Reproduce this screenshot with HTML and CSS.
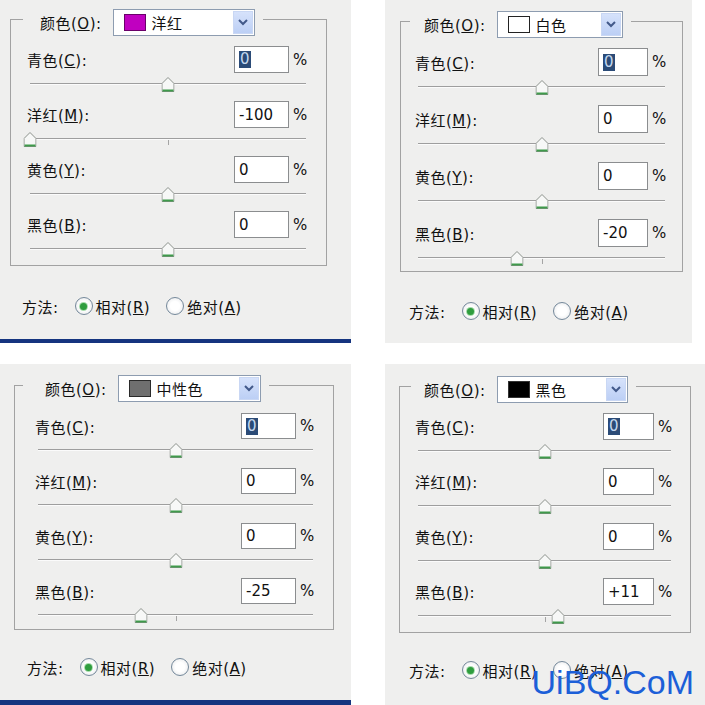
FILE: index.html
```html
<!DOCTYPE html>
<html lang="zh-CN">
<head>
  <meta charset="UTF-8" />
  <title>可选颜色</title>
  <link rel="stylesheet" href="styles.css">
</head>
<body>

<div class="sheet">

  <!-- 洋红 -->
  <section class="dialog d-tl">
    <div class="legend">
      <span class="lbl">颜色(<u>O</u>):</span>
      <div class="combo">
        <span class="swatch magenta"></span>
        <span class="combo-text">洋红</span>
        <span class="combo-btn"><svg width="10" height="7" viewBox="0 0 10 7"><polyline points="1,1 5,5 9,1" fill="none" stroke="#42598a" stroke-width="2"/></svg></span>
      </div>
    </div>
    <div class="group">
      <div class="field"><span class="lbl">青色(<u>C</u>):</span><div class="num"><span class="sel">0</span></div><span class="pct">%</span></div>
      <div class="slider"><span class="thumb" style="left:50%"><svg width="13" height="15" viewBox="0 0 13 15"><polygon points="0.5,6.5 6.5,0.5 12.5,6.5 12.5,14.5 0.5,14.5" fill="#f7f8f7" stroke="#8b918b"/><path d="M1 13.5H12" stroke="#3f9a4b" stroke-width="2"/></svg></span></div>
      <div class="field"><span class="lbl">洋红(<u>M</u>):</span><div class="num">-100</div><span class="pct">%</span></div>
      <div class="slider"><span class="thumb" style="left:0%"><svg width="13" height="15" viewBox="0 0 13 15"><polygon points="0.5,6.5 6.5,0.5 12.5,6.5 12.5,14.5 0.5,14.5" fill="#f7f8f7" stroke="#8b918b"/><path d="M1 13.5H12" stroke="#3f9a4b" stroke-width="2"/></svg></span></div>
      <div class="field"><span class="lbl">黄色(<u>Y</u>):</span><div class="num">0</div><span class="pct">%</span></div>
      <div class="slider"><span class="thumb" style="left:50%"><svg width="13" height="15" viewBox="0 0 13 15"><polygon points="0.5,6.5 6.5,0.5 12.5,6.5 12.5,14.5 0.5,14.5" fill="#f7f8f7" stroke="#8b918b"/><path d="M1 13.5H12" stroke="#3f9a4b" stroke-width="2"/></svg></span></div>
      <div class="field"><span class="lbl">黑色(<u>B</u>):</span><div class="num">0</div><span class="pct">%</span></div>
      <div class="slider"><span class="thumb" style="left:50%"><svg width="13" height="15" viewBox="0 0 13 15"><polygon points="0.5,6.5 6.5,0.5 12.5,6.5 12.5,14.5 0.5,14.5" fill="#f7f8f7" stroke="#8b918b"/><path d="M1 13.5H12" stroke="#3f9a4b" stroke-width="2"/></svg></span></div>
    </div>
    <div class="method">
      <span class="lbl">方法:</span>
      <label class="opt"><span class="radio on"></span><span class="lbl">相对(<u>R</u>)</span></label>
      <label class="opt"><span class="radio"></span><span class="lbl">绝对(<u>A</u>)</span></label>
    </div>
  </section>

  <!-- 白色 -->
  <section class="dialog d-tr">
    <div class="legend">
      <span class="lbl">颜色(<u>O</u>):</span>
      <div class="combo">
        <span class="swatch white"></span>
        <span class="combo-text">白色</span>
        <span class="combo-btn"><svg width="10" height="7" viewBox="0 0 10 7"><polyline points="1,1 5,5 9,1" fill="none" stroke="#42598a" stroke-width="2"/></svg></span>
      </div>
    </div>
    <div class="group">
      <div class="field"><span class="lbl">青色(<u>C</u>):</span><div class="num"><span class="sel">0</span></div><span class="pct">%</span></div>
      <div class="slider"><span class="thumb" style="left:50%"><svg width="13" height="15" viewBox="0 0 13 15"><polygon points="0.5,6.5 6.5,0.5 12.5,6.5 12.5,14.5 0.5,14.5" fill="#f7f8f7" stroke="#8b918b"/><path d="M1 13.5H12" stroke="#3f9a4b" stroke-width="2"/></svg></span></div>
      <div class="field"><span class="lbl">洋红(<u>M</u>):</span><div class="num">0</div><span class="pct">%</span></div>
      <div class="slider"><span class="thumb" style="left:50%"><svg width="13" height="15" viewBox="0 0 13 15"><polygon points="0.5,6.5 6.5,0.5 12.5,6.5 12.5,14.5 0.5,14.5" fill="#f7f8f7" stroke="#8b918b"/><path d="M1 13.5H12" stroke="#3f9a4b" stroke-width="2"/></svg></span></div>
      <div class="field"><span class="lbl">黄色(<u>Y</u>):</span><div class="num">0</div><span class="pct">%</span></div>
      <div class="slider"><span class="thumb" style="left:50%"><svg width="13" height="15" viewBox="0 0 13 15"><polygon points="0.5,6.5 6.5,0.5 12.5,6.5 12.5,14.5 0.5,14.5" fill="#f7f8f7" stroke="#8b918b"/><path d="M1 13.5H12" stroke="#3f9a4b" stroke-width="2"/></svg></span></div>
      <div class="field"><span class="lbl">黑色(<u>B</u>):</span><div class="num">-20</div><span class="pct">%</span></div>
      <div class="slider"><span class="thumb" style="left:40%"><svg width="13" height="15" viewBox="0 0 13 15"><polygon points="0.5,6.5 6.5,0.5 12.5,6.5 12.5,14.5 0.5,14.5" fill="#f7f8f7" stroke="#8b918b"/><path d="M1 13.5H12" stroke="#3f9a4b" stroke-width="2"/></svg></span></div>
    </div>
    <div class="method">
      <span class="lbl">方法:</span>
      <label class="opt"><span class="radio on"></span><span class="lbl">相对(<u>R</u>)</span></label>
      <label class="opt"><span class="radio"></span><span class="lbl">绝对(<u>A</u>)</span></label>
    </div>
  </section>

  <!-- 中性色 -->
  <section class="dialog d-bl">
    <div class="legend">
      <span class="lbl">颜色(<u>O</u>):</span>
      <div class="combo">
        <span class="swatch neutral"></span>
        <span class="combo-text">中性色</span>
        <span class="combo-btn"><svg width="10" height="7" viewBox="0 0 10 7"><polyline points="1,1 5,5 9,1" fill="none" stroke="#42598a" stroke-width="2"/></svg></span>
      </div>
    </div>
    <div class="group">
      <div class="field"><span class="lbl">青色(<u>C</u>):</span><div class="num"><span class="sel">0</span></div><span class="pct">%</span></div>
      <div class="slider"><span class="thumb" style="left:50%"><svg width="13" height="15" viewBox="0 0 13 15"><polygon points="0.5,6.5 6.5,0.5 12.5,6.5 12.5,14.5 0.5,14.5" fill="#f7f8f7" stroke="#8b918b"/><path d="M1 13.5H12" stroke="#3f9a4b" stroke-width="2"/></svg></span></div>
      <div class="field"><span class="lbl">洋红(<u>M</u>):</span><div class="num">0</div><span class="pct">%</span></div>
      <div class="slider"><span class="thumb" style="left:50%"><svg width="13" height="15" viewBox="0 0 13 15"><polygon points="0.5,6.5 6.5,0.5 12.5,6.5 12.5,14.5 0.5,14.5" fill="#f7f8f7" stroke="#8b918b"/><path d="M1 13.5H12" stroke="#3f9a4b" stroke-width="2"/></svg></span></div>
      <div class="field"><span class="lbl">黄色(<u>Y</u>):</span><div class="num">0</div><span class="pct">%</span></div>
      <div class="slider"><span class="thumb" style="left:50%"><svg width="13" height="15" viewBox="0 0 13 15"><polygon points="0.5,6.5 6.5,0.5 12.5,6.5 12.5,14.5 0.5,14.5" fill="#f7f8f7" stroke="#8b918b"/><path d="M1 13.5H12" stroke="#3f9a4b" stroke-width="2"/></svg></span></div>
      <div class="field"><span class="lbl">黑色(<u>B</u>):</span><div class="num">-25</div><span class="pct">%</span></div>
      <div class="slider"><span class="thumb" style="left:37.5%"><svg width="13" height="15" viewBox="0 0 13 15"><polygon points="0.5,6.5 6.5,0.5 12.5,6.5 12.5,14.5 0.5,14.5" fill="#f7f8f7" stroke="#8b918b"/><path d="M1 13.5H12" stroke="#3f9a4b" stroke-width="2"/></svg></span></div>
    </div>
    <div class="method">
      <span class="lbl">方法:</span>
      <label class="opt"><span class="radio on"></span><span class="lbl">相对(<u>R</u>)</span></label>
      <label class="opt"><span class="radio"></span><span class="lbl">绝对(<u>A</u>)</span></label>
    </div>
  </section>

  <!-- 黑色 -->
  <section class="dialog d-br">
    <div class="legend">
      <span class="lbl">颜色(<u>O</u>):</span>
      <div class="combo">
        <span class="swatch black"></span>
        <span class="combo-text">黑色</span>
        <span class="combo-btn"><svg width="10" height="7" viewBox="0 0 10 7"><polyline points="1,1 5,5 9,1" fill="none" stroke="#42598a" stroke-width="2"/></svg></span>
      </div>
    </div>
    <div class="group">
      <div class="field"><span class="lbl">青色(<u>C</u>):</span><div class="num"><span class="sel">0</span></div><span class="pct">%</span></div>
      <div class="slider"><span class="thumb" style="left:50%"><svg width="13" height="15" viewBox="0 0 13 15"><polygon points="0.5,6.5 6.5,0.5 12.5,6.5 12.5,14.5 0.5,14.5" fill="#f7f8f7" stroke="#8b918b"/><path d="M1 13.5H12" stroke="#3f9a4b" stroke-width="2"/></svg></span></div>
      <div class="field"><span class="lbl">洋红(<u>M</u>):</span><div class="num">0</div><span class="pct">%</span></div>
      <div class="slider"><span class="thumb" style="left:50%"><svg width="13" height="15" viewBox="0 0 13 15"><polygon points="0.5,6.5 6.5,0.5 12.5,6.5 12.5,14.5 0.5,14.5" fill="#f7f8f7" stroke="#8b918b"/><path d="M1 13.5H12" stroke="#3f9a4b" stroke-width="2"/></svg></span></div>
      <div class="field"><span class="lbl">黄色(<u>Y</u>):</span><div class="num">0</div><span class="pct">%</span></div>
      <div class="slider"><span class="thumb" style="left:50%"><svg width="13" height="15" viewBox="0 0 13 15"><polygon points="0.5,6.5 6.5,0.5 12.5,6.5 12.5,14.5 0.5,14.5" fill="#f7f8f7" stroke="#8b918b"/><path d="M1 13.5H12" stroke="#3f9a4b" stroke-width="2"/></svg></span></div>
      <div class="field"><span class="lbl">黑色(<u>B</u>):</span><div class="num">+11</div><span class="pct">%</span></div>
      <div class="slider"><span class="thumb" style="left:55.5%"><svg width="13" height="15" viewBox="0 0 13 15"><polygon points="0.5,6.5 6.5,0.5 12.5,6.5 12.5,14.5 0.5,14.5" fill="#f7f8f7" stroke="#8b918b"/><path d="M1 13.5H12" stroke="#3f9a4b" stroke-width="2"/></svg></span></div>
    </div>
    <div class="method">
      <span class="lbl">方法:</span>
      <label class="opt"><span class="radio on"></span><span class="lbl">相对(<u>R</u>)</span></label>
      <label class="opt"><span class="radio"></span><span class="lbl">绝对(<u>A</u>)</span></label>
    </div>
    <div class="watermark">UiBQ.CoM</div>
  </section>

</div>

</body>
</html>
```

FILE: styles.css
```css
* { box-sizing: border-box; }

body {
  margin: 0;
  background: #fff;
  color: #111;
  font-family: "DejaVu Sans", "Noto Sans CJK SC", sans-serif;
  font-size: 15px;
}

.sheet {
  display: grid;
  grid-template-columns: 351px 320px;
  grid-template-rows: 343px 341px;
  column-gap: 34px;
  row-gap: 21px;
  width: 705px;
  height: 705px;
  overflow: hidden;
}

/* one panel per colour; sizes differ a little between the four shots */
.d-tl { --pt: 8px;  --pl: 10px; --lm: 13px; --lp: 17px; --cw: 142px; --gw: 317px; --gpt: 26px; --gpr: 17px; --gpb: 8px; --gpl: 16px; --iw: 55px; --ih: 27px; --rg: 9px;  --mt: 30px; --ml: 12px; }
.d-tr { --pt: 10px; --pl: 15px; --lm: 10px; --lp: 14px; --cw: 126px; --gw: 283px; --gpt: 26px; --gpr: 14px; --gpb: 5px; --gpl: 14px; --iw: 50px; --ih: 28px; --rg: 10px; --mt: 29px; --ml: 9px; }
.d-bl { --pt: 10px; --pl: 14px; --lm: 9px;  --lp: 22px; --cw: 143px; --gw: 320px; --gpt: 27px; --gpr: 17px; --gpb: 6px; --gpl: 20px; --iw: 55px; --ih: 26px; --rg: 10px; --mt: 27px; --ml: 13px; }
.d-br { --pt: 11px; --pl: 14px; --lm: 12px; --lp: 13px; --cw: 131px; --gw: 292px; --gpt: 26px; --gpr: 16px; --gpb: 8px; --gpl: 15px; --iw: 51px; --ih: 27px; --rg: 9px;  --mt: 27px; --ml: 10px; }

.dialog {
  position: relative;
  background: #efefee;
  padding: var(--pt) 0 0 var(--pl);
}

.d-tl { border-bottom: 4px solid #15347f; }
.d-tr { width: 307px; }
.d-bl { border-bottom: 5px solid #15347f; }

.legend {
  position: relative;
  display: flex;
  align-items: center;
  width: max-content;
  height: 28px;
  margin: 0 0 -17px var(--lm);
  padding: 0 8px 0 var(--lp);
  background: #efefee;
}

.lbl {
  letter-spacing: 0.5px;
  white-space: nowrap;
}

.combo {
  display: flex;
  align-items: center;
  width: var(--cw);
  height: 27px;
  margin-left: 11px;
  border: 1px solid #8d9cb0;
  background: #fff;
}

.swatch {
  width: 22px;
  height: 17px;
  margin-left: 10px;
  border: 1px solid #333;
}

.swatch.magenta { background: #c000c0; border-color: #6a006a; }
.swatch.white   { background: #fff; border-color: #222; }
.swatch.neutral { background: #6f6f6f; border-color: #2a2a2a; }
.swatch.black   { background: #000; }

.combo-text {
  margin-left: 6px;
  letter-spacing: 0.5px;
}

.combo-btn {
  display: grid;
  place-items: center;
  width: 20px;
  align-self: stretch;
  margin: 1px 1px 1px auto;
  background: linear-gradient(#d6e2fb, #bccff5);
  border: 1px solid #c9d7f4;
}

.group {
  width: var(--gw);
  border: 1px solid #a2a2a2;
  padding: var(--gpt) var(--gpr) var(--gpb) var(--gpl);
}

.field {
  display: grid;
  grid-template-columns: 1fr var(--iw) 20px;
  align-items: center;
  height: var(--ih);
}

.num {
  display: flex;
  align-items: center;
  height: 100%;
  padding-left: 4px;
  border: 1px solid #8b8d8f;
  background: #fff;
}

.sel {
  background: #2b4b77;
  color: #c3d7ee;
  line-height: 17px;
  padding: 0 1px;
}

.pct {
  padding-left: 4px;
}

.slider {
  position: relative;
  height: 19px;
  margin: 0 3px var(--rg);
}

.slider:last-child { margin-bottom: 0; }

.slider::before {
  content: "";
  position: absolute;
  left: 0;
  right: 0;
  top: 10px;
  height: 1px;
  background: #9e9e9e;
  box-shadow: 0 1px 0 #fbfbfb;
}

.slider::after {
  content: "";
  position: absolute;
  left: 50%;
  top: 12px;
  width: 1px;
  height: 5px;
  background: #a4a4a4;
}

.thumb {
  position: absolute;
  top: 4px;
  z-index: 1;
  width: 13px;
  height: 15px;
  transform: translateX(-50%);
}

.thumb svg { display: block; }

.method {
  display: flex;
  align-items: center;
  height: 20px;
  margin-top: var(--mt);
  padding-left: var(--ml);
  gap: 16px;
}

.opt {
  display: flex;
  align-items: center;
  gap: 3px;
}

.radio {
  display: grid;
  place-items: center;
  width: 18px;
  height: 18px;
  border: 1px solid #74889a;
  border-radius: 50%;
  background: radial-gradient(#ffffff 40%, #e2e4e6);
}

.radio.on::after {
  content: "";
  width: 7px;
  height: 7px;
  border-radius: 50%;
  background: #2f9d3e;
  box-shadow: 0 0 0 1px #a7dbad;
}

.watermark {
  position: absolute;
  right: 11px;
  bottom: 6px;
  font-family: "Liberation Sans", sans-serif;
  font-size: 34px;
  line-height: 1;
  color: #1c5fd8;
}
```
